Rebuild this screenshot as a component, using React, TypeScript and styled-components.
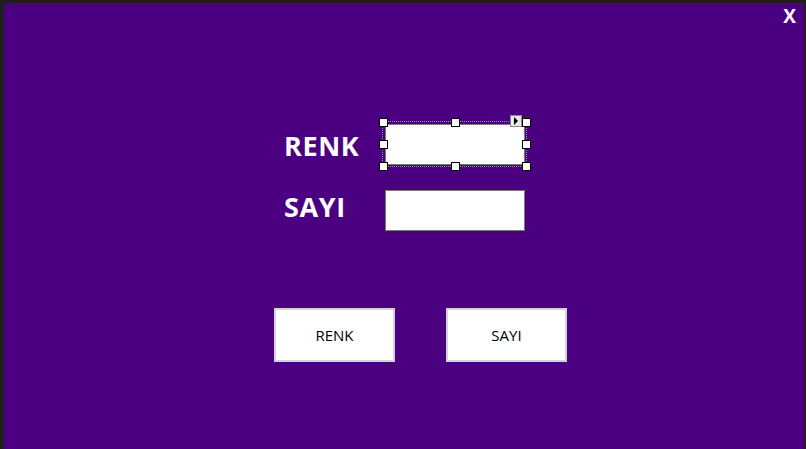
import React from "react";
import styled, { createGlobalStyle } from "styled-components";

const Global = createGlobalStyle`
  html, body { margin: 0; padding: 0; background: #1f1f1f; }
  #root { width: 806px; height: 449px; }
`;

const Frame = styled.div`
  box-sizing: border-box;
  width: 806px;
  height: 449px;
  border-top: 3px solid #1f1f1f;
  border-left: 4px solid #1f1f1f;
  border-right: 2px solid #1f1f1f;
  background: #4b0082;
  display: flex;
  flex-direction: column;
  font-family: "Open Sans", "Liberation Sans", sans-serif;
  color: #fff;
`;

const Header = styled.div`
  display: flex;
  justify-content: flex-end;
  height: 28px;
  padding-right: 8px;
`;

const Close = styled.span`
  font-size: 19px;
  font-weight: 700;
  line-height: 26px;
  cursor: pointer;
`;

const Form = styled.div`
  display: grid;
  grid-template-columns: 101px 140px;
  row-gap: 25px;
  align-items: center;
  margin: 93px 0 0 280px;
`;

const Label = styled.label<{ $shift: number }>`
  font-size: 27px;
  font-weight: 700;
  letter-spacing: 0.6px;
  line-height: 32px;
  position: relative;
  top: ${(p) => p.$shift}px;
`;

const FieldWrap = styled.div`
  position: relative;
  width: 140px;
  height: 41px;
`;

const TextBox = styled.input`
  box-sizing: border-box;
  width: 140px;
  height: 41px;
  border: 1px solid #7a7a7a;
  background: #fff;
  margin: 0;
  padding: 0 4px;
  outline: none;
  display: block;
`;

const Selection = styled.div`
  position: absolute;
  left: -3px;
  top: -3px;
  right: -2px;
  bottom: -2px;
  border: 1px dotted #9a8fb0;
  pointer-events: none;
`;

const Handle = styled.span<{ $x: string; $y: string }>`
  position: absolute;
  width: 7px;
  height: 7px;
  background: #fff;
  border: 1px solid #000;
  left: calc(${(p) => p.$x} - 4px);
  top: calc(${(p) => p.$y} - 4px);
`;

const SmartTag = styled.span`
  position: absolute;
  right: 4px;
  top: -7px;
  width: 10px;
  height: 10px;
  border: 1px solid #8a8a8a;
  background: #e8e8e8;
  display: flex;
  align-items: center;
  justify-content: center;
`;

const Buttons = styled.div`
  display: flex;
  gap: 51px;
  margin: 77px 0 0 270px;
`;

const Button = styled.button`
  box-sizing: border-box;
  width: 121px;
  height: 54px;
  background: #fff;
  border: 2px solid #d4d4d4;
  font-family: "Open Sans", "Liberation Sans", sans-serif;
  font-size: 15px;
  font-weight: 500;
  color: #000;
  padding: 0;
  cursor: pointer;
`;

const handles: [string, string][] = [
  ["0%", "0%"],
  ["50%", "0%"],
  ["100%", "0%"],
  ["0%", "50%"],
  ["100%", "50%"],
  ["0%", "100%"],
  ["50%", "100%"],
  ["100%", "100%"],
];

export default function App() {
  return (
    <>
      <Global />
      <Frame>
        <Header>
          <Close>X</Close>
        </Header>
        <Form>
          <Label $shift={1}>RENK</Label>
          <FieldWrap>
            <TextBox />
            <Selection>
              {handles.map(([x, y], i) => (
                <Handle key={i} $x={x} $y={y} />
              ))}
              <SmartTag>
                <svg width="6" height="8" viewBox="0 0 6 8">
                  <path d="M1 0 L5 4 L1 8 Z" fill="#000" />
                </svg>
              </SmartTag>
            </Selection>
          </FieldWrap>
          <Label $shift={-4}>SAYI</Label>
          <FieldWrap>
            <TextBox />
          </FieldWrap>
        </Form>
        <Buttons>
          <Button>RENK</Button>
          <Button>SAYI</Button>
        </Buttons>
      </Frame>
    </>
  );
}
